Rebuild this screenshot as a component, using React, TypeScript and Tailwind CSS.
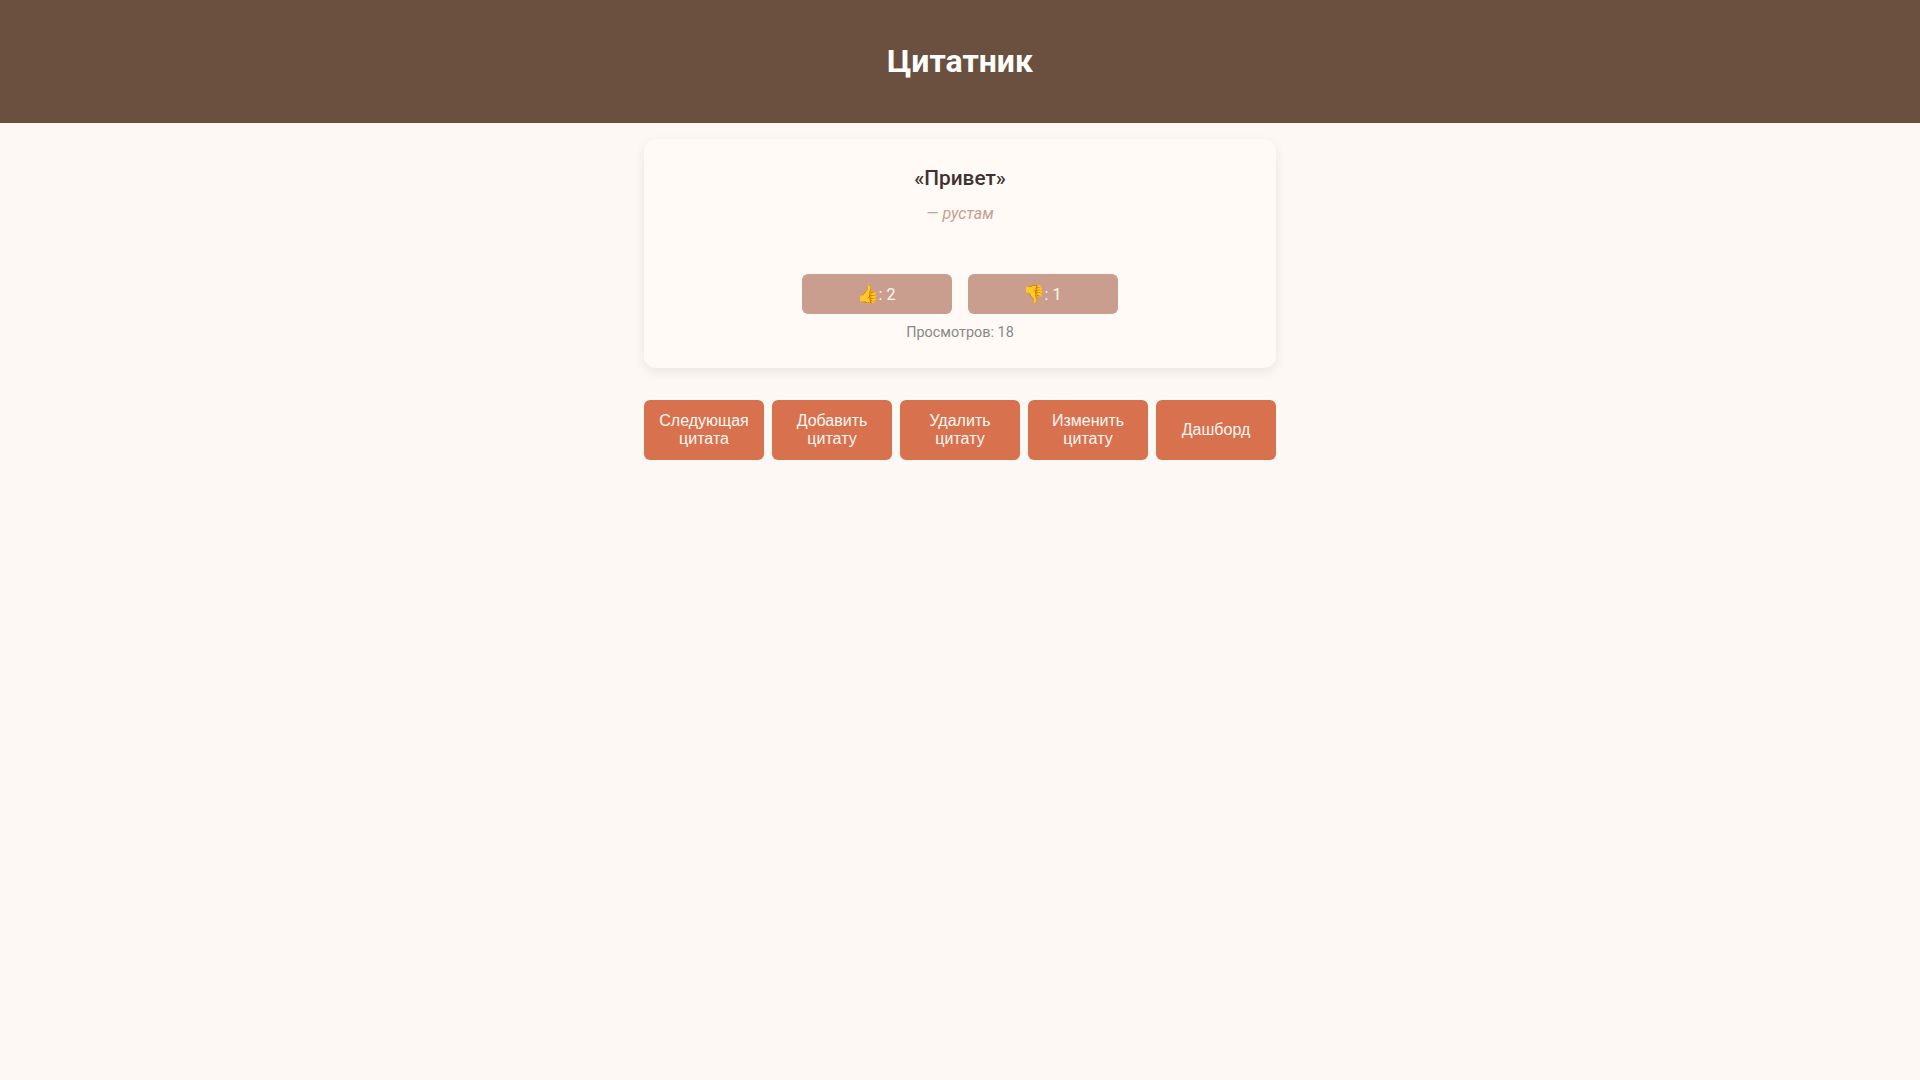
export default function App() {
  return (
    <div className="min-h-screen bg-[#fdf8f4] font-['Roboto',sans-serif] text-[#3e3330]">
      <header className="bg-[#6b4f3f] h-[123px] flex items-center justify-center pb-0.5">
        <h1 className="text-[32px] font-bold text-white">Цитатник</h1>
      </header>

      <main className="w-[632px] mx-auto mt-4">
        <section className="bg-[#fffaf6] rounded-xl shadow-[0_4px_12px_rgba(0,0,0,0.08)] pt-6 px-6 h-[229px] flex flex-col items-center">
          <p className="text-[20.8px] font-medium leading-[30px]">«Привет»</p>
          <p className="mt-[9px] text-base italic text-[#c99e8f] leading-6">— рустам</p>

          <div className="flex gap-4 mt-[48px]">
            <button className="w-[150px] h-10 pr-0.5 rounded-md bg-[#c99e8f] text-[#fff8f3] text-base">
              <span className="text-[17.6px]">👍</span>: 2
            </button>
            <button className="w-[150px] h-10 pr-0.5 rounded-md bg-[#c99e8f] text-[#fff8f3] text-base">
              <span className="text-[17.6px]">👎</span>: 1
            </button>
          </div>
          <p className="mt-[9px] text-[14.4px] leading-5 text-[#888888]">Просмотров: 18</p>
        </section>

        <div className="grid grid-cols-5 gap-2 mt-8">
          {["Следующая цитата", "Добавить цитату", "Удалить цитату", "Изменить цитату", "Дашборд"].map((label) => (
            <button
              key={label}
              className="h-[60px] px-3 rounded-md bg-[#d7714e] text-[#fff8f3] text-base leading-[18px] font-['Liberation_Sans',sans-serif]"
            >
              {label}
            </button>
          ))}
        </div>
      </main>
    </div>
  )
}
